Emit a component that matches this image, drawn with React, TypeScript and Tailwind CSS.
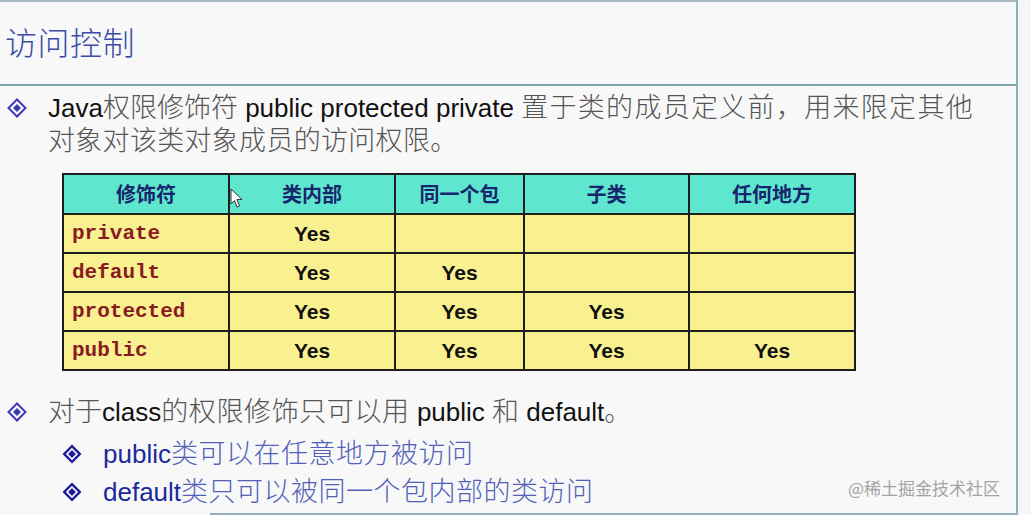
import React from 'react';

const Zh: React.FC<{ children: React.ReactNode; className?: string }> = ({ children, className = '' }) => (
    <span className={`text-[27px] font-light ${className}`}>{children}</span>
);

const Bullet: React.FC = () => (
    <svg width="20" height="20" viewBox="0 0 20 20">
        <path d="M10 1.5 L18.5 10 L10 18.5 L1.5 10 Z" fill="none" stroke="#3a3ab4" strokeWidth="2" />
        <path d="M10 6 L14 10 L10 14 L6 10 Z" fill="#3a3ab4" />
    </svg>
);

const SubBullet: React.FC = () => (
    <svg width="20" height="20" viewBox="0 0 20 20">
        <path d="M10 0.5 L19.5 10 L10 19.5 L0.5 10 Z" fill="#1c1c96" />
        <path d="M10 5 L15 10 L10 15 L5 10 Z" fill="none" stroke="#ffffff" strokeWidth="1.6" />
        <path d="M10 7.8 L12.2 10 L10 12.2 L7.8 10 Z" fill="#1c1c96" />
    </svg>
);

const rows = [
    { name: 'private', cells: ['Yes', '', '', ''] },
    { name: 'default', cells: ['Yes', 'Yes', '', ''] },
    { name: 'protected', cells: ['Yes', 'Yes', 'Yes', ''] },
    { name: 'public', cells: ['Yes', 'Yes', 'Yes', 'Yes'] },
];

const headers = ['修饰符', '类内部', '同一个包', '子类', '任何地方'];
const widths = ['w-[166px]', 'w-[166px]', 'w-[129px]', 'w-[165px]', 'w-[166px]'];

const App: React.FC = () => {
    return (
        <div className="relative w-[1031px] h-[515px] overflow-hidden bg-[#f4f6f9] flex font-['Liberation_Sans','Noto_Sans_CJK_SC',sans-serif]">
            <div className="w-[1018px] h-full bg-[#f8f8f8] border-t-2 border-t-[#a9b9c1] border-r-2 border-r-[#86b3bb] flex flex-col">
                {/* title */}
                <div className="h-[84px] shrink-0 border-b-2 border-[#7fa5ad] flex items-center pl-[5px] pt-[2px]">
                    <h1 className="text-[32px] font-light text-[#3c4ca6] leading-none tracking-[0.5px]">访问控制</h1>
                </div>

                {/* first bullet */}
                <div className="mt-[6px] flex">
                    <div className="w-[48px] shrink-0 pl-[7px] pt-[6px]">
                        <Bullet />
                    </div>
                    <div className="text-[26px] leading-[33px] text-[#111]">
                        <div className="whitespace-nowrap">
                            Java<Zh className="text-[#555]">权限修饰符</Zh> public protected private{' '}
                            <Zh className="text-[#555] tracking-[1.3px]">置于类的成员定义前，用来限定其他</Zh>
                        </div>
                        <div>
                            <Zh className="text-[#555] tracking-[0.3px]">对象对该类对象成员的访问权限。</Zh>
                        </div>
                    </div>
                </div>

                {/* table */}
                <div className="relative ml-[62px] mt-[15px]">
                    <table className="table-fixed border-collapse border-2 border-[#1e1e1e]">
                        <thead>
                            <tr className="h-[40px] bg-[#5fe6cf]">
                                {headers.map((h, i) => (
                                    <th
                                        key={h}
                                        className={`${widths[i]} border-2 border-[#1e1e1e] p-0 text-center text-[20px] font-bold text-[#16256c] font-['Noto_Sans_CJK_SC',sans-serif]`}
                                    >
                                        {h}
                                    </th>
                                ))}
                            </tr>
                        </thead>
                        <tbody>
                            {rows.map((r) => (
                                <tr key={r.name} className="h-[39px] bg-[#f9f090]">
                                    <td className="border-2 border-[#1e1e1e] pl-[8px] text-[21px] font-bold text-[#8a1a22] font-['Liberation_Mono',monospace]">
                                        {r.name}
                                    </td>
                                    {r.cells.map((c, i) => (
                                        <td key={i} className="border-2 border-[#1e1e1e] p-0 text-center text-[21px] font-bold text-[#111]">
                                            {c}
                                        </td>
                                    ))}
                                </tr>
                            ))}
                        </tbody>
                    </table>
                    {/* mouse cursor */}
                    <svg className="absolute left-[168px] top-[15px]" width="13" height="21" viewBox="0 0 13 21">
                        <path d="M1 1 L1 16 L4.5 12.5 L7 19 L9.5 18 L7 11.5 L12 11.5 Z" fill="#ffffff" stroke="#333" strokeWidth="1" strokeLinejoin="round" />
                    </svg>
                </div>

                {/* second bullet */}
                <div className="mt-[22px] flex items-center h-[38px]">
                    <div className="w-[48px] shrink-0 pl-[7px] flex items-center">
                        <Bullet />
                    </div>
                    <div className="text-[26px] leading-[38px] text-[#111] whitespace-nowrap">
                        <Zh className="text-[#555]">对于</Zh>class<Zh className="text-[#555] tracking-[0.6px]">的权限修饰只可以用</Zh> public <Zh className="text-[#555]">和</Zh> default<Zh className="text-[#555]">。</Zh>
                    </div>
                </div>

                <div className="mt-[4px] flex items-center h-[38px] pl-[62px]">
                    <div className="w-[41px] shrink-0 flex items-center">
                        <SubBullet />
                    </div>
                    <div className="text-[26px] leading-[38px] text-[#1a2a9c] whitespace-nowrap">
                        public<Zh className="text-[#5261b8] tracking-[0.5px]">类可以在任意地方被访问</Zh>
                    </div>
                </div>

                <div className="flex items-center h-[38px] pl-[62px]">
                    <div className="w-[41px] shrink-0 flex items-center">
                        <SubBullet />
                    </div>
                    <div className="text-[26px] leading-[38px] text-[#1a2a9c] whitespace-nowrap">
                        default<Zh className="text-[#5261b8] tracking-[0.5px]">类只可以被同一个包内部的类访问</Zh>
                    </div>
                </div>
            </div>

            {/* bottom frame edge */}
            <div className="absolute left-[210px] bottom-0 w-[808px] h-[2px] bg-[#8fb0b8]" />

            {/* watermark */}
            <div className="absolute left-[848px] top-[477px] text-[17px] leading-[22px] text-[#a3a3a3] font-['Noto_Sans_CJK_SC',sans-serif]">
                @稀土掘金技术社区
            </div>
        </div>
    );
};

export default App;
